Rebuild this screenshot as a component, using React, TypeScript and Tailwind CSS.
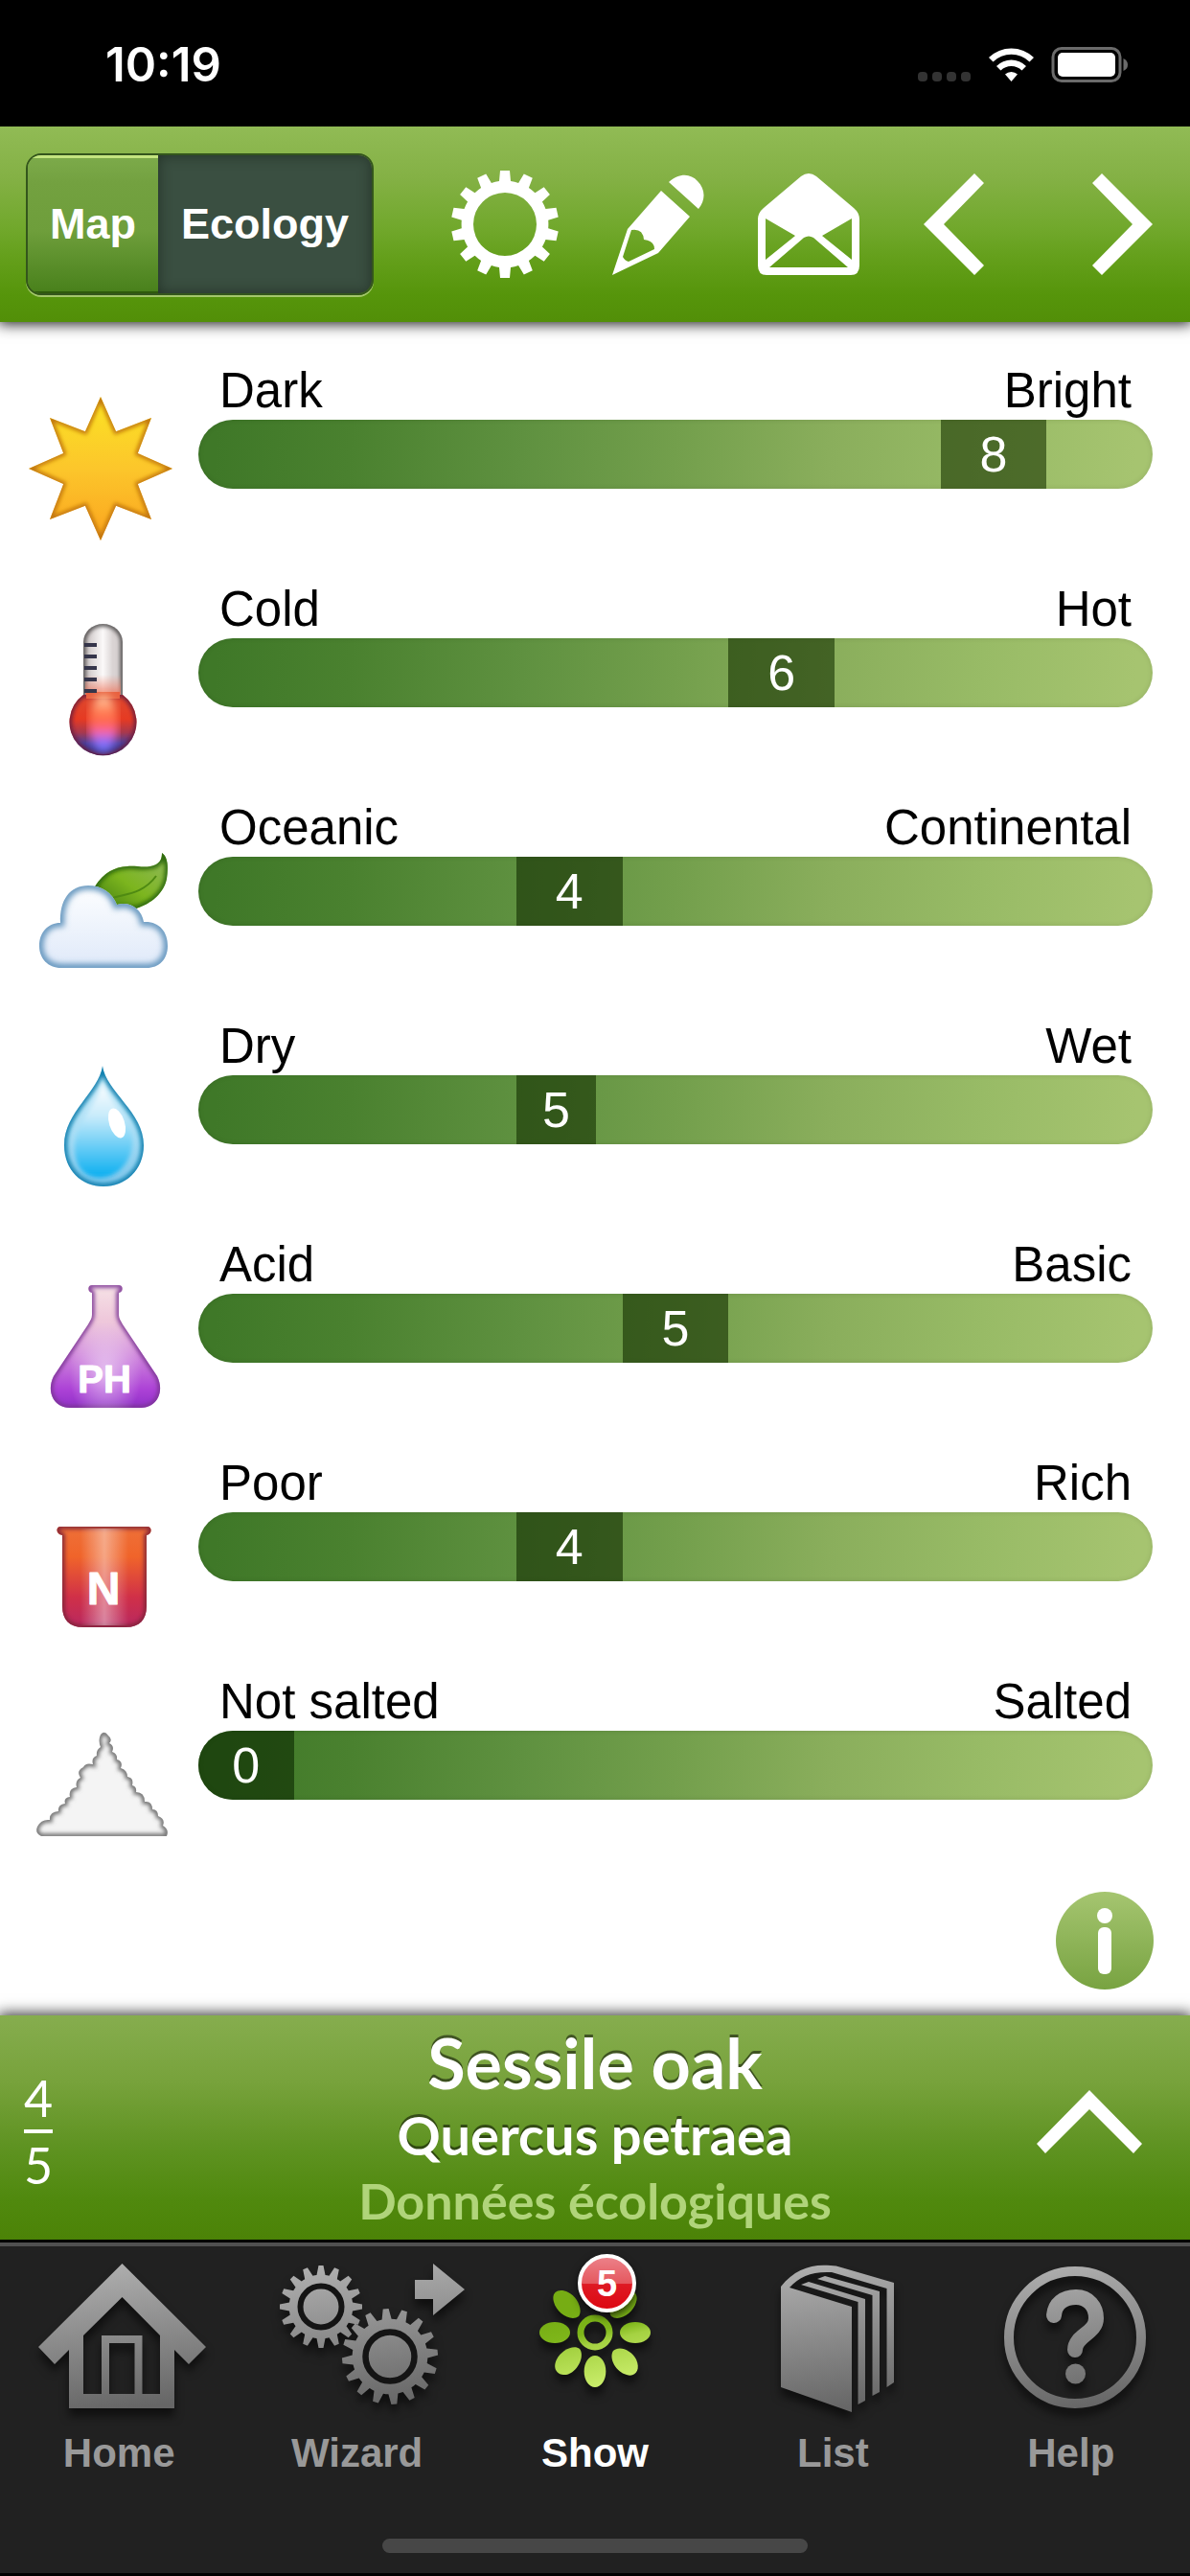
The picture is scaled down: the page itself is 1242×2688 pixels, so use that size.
import React from "react";

type Point = { cx: number; cy: number };

// Outline of a cog wheel: `teeth` trapezoid teeth around a round body
function gearPath(
  { cx, cy }: Point,
  teeth: number,
  outer: number,
  body: number,
  base: number,
  tip: number,
  start = 0
) {
  const at = (r: number, offset: number, angle: number) => {
    const x = cx + r * Math.sin(angle) + offset * Math.cos(angle);
    const y = cy - r * Math.cos(angle) + offset * Math.sin(angle);
    return `${x.toFixed(1)} ${y.toFixed(1)}`;
  };
  let d = "";
  for (let i = 0; i < teeth; i++) {
    const a = ((start + (i * 360) / teeth) * Math.PI) / 180;
    d += `${i === 0 ? "M" : `A${body} ${body} 0 0 1 `}${at(body, -base, a)}`;
    d += `L${at(outer, -tip, a)}L${at(outer, tip, a)}L${at(body, base, a)}`;
  }
  const first = (start * Math.PI) / 180;
  return `${d}A${body} ${body} 0 0 1 ${at(body, -base, first)}Z`;
}

// Filled shape with a soft darker rim on the inside
function Glossy({
  id,
  d,
  fill,
  edge,
  width = 8,
  blur = 2,
}: {
  id: string;
  d: string;
  fill: string;
  edge: string;
  width?: number;
  blur?: number;
}) {
  return (
    <g>
      <clipPath id={`${id}-clip`}>
        <path d={d} />
      </clipPath>
      <filter id={`${id}-blur`}>
        <feGaussianBlur stdDeviation={blur} />
      </filter>
      <path d={d} fill={fill} />
      <g clipPath={`url(#${id}-clip)`}>
        <path
          d={d}
          fill="none"
          stroke={edge}
          strokeWidth={width}
          filter={`url(#${id}-blur)`}
        />
      </g>
    </g>
  );
}

function Fade({ id, stops }: { id: string; stops: [string, string][] }) {
  return (
    <linearGradient id={id} x1="0" y1="0" x2="0" y2="1">
      {stops.map(([offset, color]) => (
        <stop key={offset} offset={offset} stopColor={color} />
      ))}
    </linearGradient>
  );
}

function Sun() {
  const points: string[] = [];
  for (let i = 0; i < 16; i++) {
    const r = i % 2 === 0 ? 75 : 42;
    const a = (i * Math.PI) / 8;
    points.push(
      `${(80 + r * Math.sin(a)).toFixed(1)} ${(81 - r * Math.cos(a)).toFixed(1)}`
    );
  }
  return (
    <>
      <Fade
        id="sun"
        stops={[
          ["0", "#fbe424"],
          ["0.5", "#fcc62b"],
          ["1", "#fba41f"],
        ]}
      />
      <Glossy
        id="sun"
        d={`M${points.join("L")}Z`}
        fill="url(#sun)"
        edge="#c07510"
        width={5}
      />
    </>
  );
}

function Thermometer() {
  return (
    <>
      <linearGradient id="tube" x1="0" x2="1" y1="0" y2="0">
        <stop offset="0.1" stopColor="#cfc8c8" />
        <stop offset="0.5" stopColor="#fbf9f9" />
        <stop offset="0.75" stopColor="#d9d3d3" />
      </linearGradient>
      <Fade
        id="bulb"
        stops={[
          ["0", "#dd4a30"],
          ["0.4", "#e63a22"],
          ["0.62", "#a8384e"],
          ["0.8", "#4a3f9a"],
          ["1", "#2e3180"],
        ]}
      />
      <Fade
        id="bulb-shine"
        stops={[
          ["0", "#ffd9b0"],
          ["0.3", "#ff7a50"],
          ["0.5", "#ff6450"],
          ["0.66", "#f766b0"],
          ["0.8", "#8a6cf8"],
          ["1", "#6a78ff"],
        ]}
      />
      <linearGradient id="warm" x1="0" x2="0" y1="0" y2="1">
        <stop offset="0" stopColor="#f08a74" stopOpacity="0" />
        <stop offset="1" stopColor="#ee6a50" />
      </linearGradient>
      <filter id="soft">
        <feGaussianBlur stdDeviation="5" />
      </filter>
      <clipPath id="bulb-area">
        <circle cx="83" cy="117" r="34" />
      </clipPath>
      <Glossy
        id="tube"
        d="M62 96V34A20.5 19 0 0 1 103 34V96Z"
        fill="url(#tube)"
        edge="#4c4a4a"
        width={5}
      />
      <rect x="64" y="68" width="37" height="26" fill="url(#warm)" />
      <Glossy
        id="bulb"
        d="M62 89A35 35 0 1 0 103 89Z"
        fill="url(#bulb)"
        edge="#6a1c3c"
        width={5}
      />
      <rect x="65" y="86" width="35" height="7" fill="#e8603f" />
      <g clipPath="url(#bulb-area)">
        <ellipse
          cx="83"
          cy="119"
          rx="15"
          ry="30"
          fill="url(#bulb-shine)"
          filter="url(#soft)"
        />
      </g>
      <path
        d="M63 37H76M63 49H76M63 61H76M63 73H76M63 85H76"
        stroke="#35354a"
        strokeWidth="4"
      />
    </>
  );
}

function CloudLeaf() {
  return (
    <>
      <linearGradient id="leaf" x1="0" y1="1" x2="1" y2="0">
        <stop offset="0" stopColor="#3f7a10" />
        <stop offset="0.45" stopColor="#7cb51e" />
        <stop offset="0.85" stopColor="#8cb84e" />
        <stop offset="1" stopColor="#4f8420" />
      </linearGradient>
      <Fade
        id="cloud"
        stops={[
          ["0", "#fdfeff"],
          ["1", "#dfe9f9"],
        ]}
      />
      <Glossy
        id="leaf"
        d="M74 61C84 46 94 41 108 40C118 39 128 43 138 38C143 35 144 31 144 26C150 30 151 40 149 53C146 68 133 79 117 84L92 84Z"
        fill="url(#leaf)"
        edge="#2f6b0c"
        width={6}
      />
      <path
        d="M84 76C100 68 122 72 138 50"
        fill="none"
        stroke="#4f8a12"
        strokeWidth="2"
      />
      <Glossy
        id="cloud"
        d="M39 146C25 146 16 136 16 123C16 109 25 99 38 99C37 75 48 60 67 60C81 60 92 67 97 80C110 76 123 84 125 98C141 97 150 108 150 123C150 137 141 146 128 146Z"
        fill="url(#cloud)"
        edge="#5c90ba"
        width={8}
        blur={3}
      />
    </>
  );
}

function Drop() {
  return (
    <>
      <Fade
        id="drop"
        stops={[
          ["0", "#d8f1fb"],
          ["0.6", "#a4dcf5"],
          ["1", "#7cc4ea"],
        ]}
      />
      <Fade
        id="drop-core"
        stops={[
          ["0", "#ffffff"],
          ["0.35", "#c8ebfb"],
          ["1", "#08aef0"],
        ]}
      />
      <filter id="drop-soft">
        <feGaussianBlur stdDeviation="2" />
      </filter>
      <Glossy
        id="drop"
        d="M82 20C86 48 125 68 125 103C125 129 106 146 83 146C60 146 42 129 42 103C42 68 78 48 82 20Z"
        fill="url(#drop)"
        edge="#0b7fae"
        width={6}
      />
      <path
        d="M82 38C87 56 113 76 113 99C113 121 97 137 79 137C63 137 53 125 53 107C53 80 78 58 82 38Z"
        fill="url(#drop-core)"
        filter="url(#drop-soft)"
      />
      <ellipse
        cx="97"
        cy="80"
        rx="8"
        ry="16"
        fill="#ffffff"
        transform="rotate(-18 97 80)"
      />
    </>
  );
}

function Flask() {
  return (
    <>
      <Fade
        id="flask"
        stops={[
          ["0", "#f6e2e6"],
          ["0.3", "#eec6da"],
          ["0.6", "#cc80dc"],
          ["0.85", "#ac42d6"],
          ["1", "#9030c8"],
        ]}
      />
      <radialGradient id="flask-glow">
        <stop offset="0" stopColor="#ffffff" stopOpacity="0.55" />
        <stop offset="1" stopColor="#ffffff" stopOpacity="0" />
      </radialGradient>
      <Glossy
        id="flask"
        d="M71 29C66 28 66 21 71 21H99C104 21 104 28 99 29V52C99 56 101 58 103 62L139 116C147 132 139 149 122 149H48C31 149 23 132 31 116L67 62C69 58 71 56 71 52Z"
        fill="url(#flask)"
        edge="#7c3494"
        width={5}
      />
      <ellipse cx="85" cy="112" rx="38" ry="56" fill="url(#flask-glow)" />
      <text
        x="84"
        y="133"
        textAnchor="middle"
        fill="#ffffff"
        stroke="#ffffff"
        strokeWidth="1"
        strokeLinejoin="round"
        className="font-['Liberation_Sans',sans-serif] text-[40px] font-bold"
      >
        PH
      </text>
    </>
  );
}

function Beaker() {
  return (
    <>
      <Fade
        id="beaker"
        stops={[
          ["0", "#ee7038"],
          ["0.3", "#f0642a"],
          ["0.7", "#d03048"],
          ["1", "#b82860"],
        ]}
      />
      <linearGradient id="beaker-glow" x1="0" x2="1" y1="0" y2="0">
        <stop offset="0.2" stopColor="#ffffff" stopOpacity="0" />
        <stop offset="0.5" stopColor="#ffffff" stopOpacity="0.42" />
        <stop offset="0.8" stopColor="#ffffff" stopOpacity="0" />
      </linearGradient>
      <Glossy
        id="beaker"
        d="M40 54C33 53 33 45 38 45H129C134 45 134 53 128 54V128C128 142 121 150 106 150H62C47 150 40 142 40 128Z"
        fill="url(#beaker)"
        edge="#802038"
        width={5}
      />
      <rect x="42" y="47" width="84" height="101" fill="url(#beaker-glow)" />
      <text
        x="83"
        y="126"
        textAnchor="middle"
        fill="#ffffff"
        stroke="#ffffff"
        strokeWidth="1"
        strokeLinejoin="round"
        className="font-['Liberation_Sans',sans-serif] text-[48px] font-bold"
      >
        N
      </text>
    </>
  );
}

function SaltHeap() {
  return (
    <Glossy
      id="salt"
      d="M18 140Q11 137 14 130Q18 122 27 123Q26 115 36 114Q35 107 43 106Q41 100 48 99Q46 90 55 89Q53 82 59 79Q54 72 62 68Q64 63 72 65Q70 58 76 56Q75 50 80 47Q77 40 80 34Q84 29 88 35Q93 39 89 43Q95 46 92 52Q98 54 97 60Q104 62 101 69Q108 71 108 78Q115 79 113 87Q118 88 117 94Q126 94 126 104Q134 103 134 112Q140 112 140 119Q148 122 145 129Q152 133 149 140Z"
      fill="#f4f4f4"
      edge="#666666"
      width={5}
    />
  );
}

const gauges = [
  { low: "Dark", high: "Bright", value: 8, index: 7, steps: 9, Icon: Sun },
  { low: "Cold", high: "Hot", value: 6, index: 5, steps: 9, Icon: Thermometer },
  { low: "Oceanic", high: "Continental", value: 4, index: 3, steps: 9, Icon: CloudLeaf },
  { low: "Dry", high: "Wet", value: 5, index: 4, steps: 12, Icon: Drop },
  { low: "Acid", high: "Basic", value: 5, index: 4, steps: 9, Icon: Flask },
  { low: "Poor", high: "Rich", value: 4, index: 3, steps: 9, Icon: Beaker },
  { low: "Not salted", high: "Salted", value: 0, index: 0, steps: 10, Icon: SaltHeap },
];

function Gauge({ low, high, value, index, steps, Icon }: (typeof gauges)[number]) {
  return (
    <li className="flex h-[228px] items-start gap-[22px] pr-[39px] pl-[25px]">
      <svg viewBox="0 0 160 160" className="mt-[30px] size-40 shrink-0" aria-hidden="true">
        <Icon />
      </svg>
      <div className="flex-1">
        <div className="flex justify-between px-[22px] text-[51px] leading-[60px] text-black">
          <span>{low}</span>
          <span>{high}</span>
        </div>
        <div
          role="meter"
          aria-label={`${low} - ${high}`}
          aria-valuenow={value}
          aria-valuemin={0}
          aria-valuemax={steps}
          className="h-[72px] overflow-hidden rounded-full bg-[linear-gradient(94deg,#3f7828_2%,#4a812f_16%,#5f9140_34%,#739f4c_50%,#8aae5c_66%,#98bb66_82%,#a6c470_98%)] shadow-[inset_0_0_6px_-1px_rgba(0,0,0,0.15)]"
        >
          <div
            className="flex h-full items-center justify-center bg-[#0c2e00]/60 bg-blend-multiply text-[52px] leading-[72px] text-white"
            style={{
              width: `${100 / steps}%`,
              marginLeft: `${(100 * index) / steps}%`,
              backgroundColor: `rgb(${10 + index * 2} ${38 + index * 2} 0 / 0.6)`,
            }}
          >
            {value}
          </div>
        </div>
      </div>
    </li>
  );
}

function StatusBar() {
  return (
    <div className="flex h-[132px] items-center justify-between bg-black pt-1 pr-[65px] pl-[110px] text-white">
      <span className="font-['Inter',sans-serif] text-[49px] leading-[60px] font-semibold">
        10:19
      </span>
      <svg viewBox="0 0 220 48" className="h-12 w-[220px]" aria-hidden="true">
        <g fill="#333333">
          <rect x="1" y="31" width="10" height="10" rx="4" />
          <rect x="16" y="31" width="10" height="10" rx="4" />
          <rect x="31" y="31" width="10" height="10" rx="4" />
          <rect x="46" y="31" width="10" height="10" rx="4" />
        </g>
        <path
          fill="#ffffff"
          d="M75 16A34 34 0 0 1 122 16L117.500 20.500A27 27 0 0 0 79.500 20.500ZM83 25A22 22 0 0 1 114 25L109.500 29.500A15.500 15.500 0 0 0 87.500 29.500ZM92 33.500A9.500 9.500 0 0 1 105 33.500L98.500 41Z"
        />
        <rect x="142" y="6.500" width="70" height="34" rx="9" fill="none" stroke="#6b6b6b" strokeWidth="3" />
        <rect x="147" y="11" width="60" height="25" rx="5" fill="#ffffff" />
        <path d="M215.500 17Q220 19 220 23.500T215.500 30Z" fill="#6b6b6b" />
      </svg>
    </div>
  );
}

const iconButton = "flex h-full items-center justify-center";

function Toolbar() {
  return (
    <header className="relative z-10 flex h-[204px] items-center bg-[linear-gradient(#91bb55_0%,#84b145_26%,#71a82c_52%,#65a01c_66%,#56950b_86%,#528f08_100%)] pr-[39px] pl-[27px] shadow-[0_0_14px_2px_rgba(0,0,0,0.9)]">
      <div className="flex h-[148px] w-[363px] shrink-0 overflow-hidden rounded-[16px] border-2 border-[#34561c] text-[45px] leading-[60px] font-bold text-white shadow-[0_2px_0_#a3c76c] text-shadow-[0_-3px_0_rgba(0,0,0,0.45)]">
        <button
          type="button"
          className="w-[136px] bg-[linear-gradient(#7dab4b_0%,#73a140_20%,#6e9e3b_55%,#48801b_100%)] shadow-[inset_0_3px_0_#c3e57f,inset_0_-2px_0_#2e5a0c]"
        >
          Map
        </button>
        <button
          type="button"
          aria-pressed="true"
          className="flex-1 bg-[#3a4f41] shadow-[inset_0_0_14px_rgba(20,30,22,0.6)]"
        >
          Ecology
        </button>
      </div>
      <nav className="ml-20 flex h-full flex-1 items-center gap-[54px]">
        <button type="button" aria-label="Settings" className={iconButton}>
          <svg viewBox="0 0 114 114" className="size-[114px] fill-white">
            <path
              fillRule="evenodd"
              d={`${gearPath({ cx: 57, cy: 57 }, 14, 56, 45, 6, 5)}M57 24A33 33 0 1 0 57 90A33 33 0 1 0 57 24Z`}
            />
          </svg>
        </button>
        <button type="button" aria-label="Edit" className={iconButton}>
          <svg viewBox="0 0 98 106" className="h-[106px] w-[98px] fill-white">
            <path
              fillRule="evenodd"
              d="M1 106L17 58L52 18L82 45L49 83ZM21 59L12 87Q14 91 18 92L45 79Q45 70 34 69Q33 57 21 59Z"
            />
            <path d="M60 9C71 -1 83 0 90 8C98 16 99 27 91 37Z" />
          </svg>
        </button>
        <button type="button" aria-label="Send" className={iconButton}>
          <svg viewBox="0 0 108 106" className="h-[106px] w-[108px] fill-white">
            <path
              fillRule="evenodd"
              d="M46 3Q54 -3 62 3L101 36Q107 41 107 48V96Q107 106 98 106H10Q1 106 1 96V48Q1 41 7 36ZM9 47V90L40 65ZM99 47L68 65L99 90ZM13 98H95L59 67Q54 64 49 67Z"
            />
          </svg>
        </button>
        <div className="ml-3 flex h-full flex-1 items-center justify-between">
          <button type="button" aria-label="Previous" className={iconButton}>
            <svg viewBox="0 0 64 106" className="h-[106px] w-16 fill-white">
              <path d="M53 0L63 10L21 53L63 96L53 106L0 53Z" />
            </svg>
          </button>
          <button type="button" aria-label="Next" className={iconButton}>
            <svg viewBox="0 0 64 106" className="h-[106px] w-16 fill-white">
              <path d="M11 0L1 10L43 53L1 96L11 106L64 53Z" />
            </svg>
          </button>
        </div>
      </nav>
    </header>
  );
}

function SpeciesBar() {
  return (
    <section className="relative z-10 flex h-[234px] items-center bg-[linear-gradient(#86ad4e_0%,#77a23b_30%,#5f9322_58%,#50890e_82%,#4c8307_100%)] px-[25px] font-['Lato',sans-serif] text-white shadow-[0_0_14px_2px_rgba(0,0,0,0.8)]">
      <div className="flex w-[136px] flex-col items-start pt-2 text-[52px] leading-[66px]">
        <span className="border-b-4 border-white">4</span>
        <span>5</span>
      </div>
      <div className="flex flex-1 flex-col items-center whitespace-nowrap">
        <h1 className="text-[72px] leading-[82px] font-bold text-shadow-[0_-3px_0_rgba(0,0,0,0.5)]">
          Sessile oak
        </h1>
        <h2 className="text-[56px] leading-[70px] font-bold text-shadow-[0_-3px_0_rgba(0,0,0,0.5)]">
          Quercus petraea
        </h2>
        <p className="text-[52px] leading-[66px] font-bold text-[#b0d47a]">
          Données écologiques
        </p>
      </div>
      <button type="button" aria-label="Show details" className="flex w-[136px] justify-start pb-3">
        <svg viewBox="0 0 112 66" className="h-[66px] w-28 fill-white">
          <path d="M56 0L111 56L102 66L56 20L10 66L1 56Z" />
        </svg>
      </button>
    </section>
  );
}

function HomeIcon() {
  return (
    <path
      fill="url(#tab-gray)"
      fillRule="evenodd"
      d="M103.500 7L191 94L173 112L158 97V158H48V97L33 112L16 94ZM103.500 42L63 82V143H82V82H124.500V143H143V82ZM90 90V143H116.500V90Z"
    />
  );
}

function WizardIcon() {
  return (
    <g fill="url(#tab-gray)">
      <path d={gearPath({ cx: 62, cy: 52 }, 16, 43, 33, 4.5, 2.5)} />
      <circle cx="62" cy="52" r="21.500" fill="none" stroke="#141414" strokeWidth="6" />
      <path d={gearPath({ cx: 134, cy: 104 }, 16, 50, 39, 5, 3, -5)} />
      <circle cx="134" cy="104" r="25.500" fill="none" stroke="#141414" strokeWidth="6.500" />
      <path d="M160 24H179V7L212 34L179 61V44H160Z" />
    </g>
  );
}

function ShowIcon() {
  return (
    <g fill="url(#tab-green)">
      <circle cx="100" cy="79" r="15" fill="none" stroke="url(#tab-green)" strokeWidth="7" />
      <path d="M126 79A16 11 0 1 0 158 79A16 11 0 1 0 126 79Z" />
      <path d="M42 79A16 11 0 1 0 74 79A16 11 0 1 0 42 79Z" />
      <path d="M100 103A11 16 0 1 0 100 136A11 16 0 1 0 100 103Z" />
      <path d="M119 98C125 92 138 97 143 107C148 118 142 126 133 123C122 120 114 106 119 98Z" />
      <path d="M84 96C78 91 65 97 60 107C55 117 61 124 70 123C81 121 90 104 84 96Z" />
      <path d="M83 62C88 55 81 41 72 37C62 32 54 37 57 47C60 59 75 68 83 62Z" />
      <path d="M117 62C112 55 119 41 128 37C138 32 146 37 143 47C140 59 125 68 117 62Z" />
    </g>
  );
}

function ListIcon() {
  return (
    <g fill="url(#tab-gray)">
      <path
        fillRule="evenodd"
        d="M46 31C60 13 78 7 98 9Q104 9 109 11L164 27V131L156.500 136V33L99 16C78 15 66 20 55 32L120 52V162L46 136Z"
      />
      <path d="M67 29L75 26L134 44V150L126.500 154V47Z" />
      <path d="M84 23L92 20L149 36V141L141.500 145V40Z" />
    </g>
  );
}

function HelpIcon() {
  return (
    <g fill="none" stroke="url(#tab-gray)" strokeLinecap="round">
      <circle cx="104" cy="84" r="69" strokeWidth="10" />
      <path
        strokeWidth="16"
        d="M82 61C83 49 92 42 105 42C118 42 126 52 126 64C126 80 104 82 104 97"
      />
      <circle cx="104.500" cy="122" r="10.500" fill="url(#tab-gray)" stroke="none" />
    </g>
  );
}

const tabs = [
  { name: "Home", Icon: HomeIcon },
  { name: "Wizard", Icon: WizardIcon },
  { name: "Show", Icon: ShowIcon, active: true, badge: 5 },
  { name: "List", Icon: ListIcon },
  { name: "Help", Icon: HelpIcon },
];

function TabBar() {
  return (
    <footer className="relative z-20 flex flex-1 flex-col items-center border-b-[3px] border-black bg-[#212121]">
      <div className="h-[3px] w-full bg-black" />
      <div className="h-1 w-full bg-[#505050]" />
      <svg className="absolute size-0" aria-hidden="true">
        <defs>
          <linearGradient id="tab-gray" gradientUnits="userSpaceOnUse" x1="80" y1="5" x2="100" y2="160">
            <stop offset="0" stopColor="#b0b0b0" />
            <stop offset="1" stopColor="#666666" />
          </linearGradient>
          <linearGradient id="tab-green" gradientUnits="userSpaceOnUse" x1="88" y1="55" x2="108" y2="136">
            <stop offset="0" stopColor="#76ad14" />
            <stop offset="0.300" stopColor="#7eb61a" />
            <stop offset="0.450" stopColor="#a5d242" />
            <stop offset="1" stopColor="#cbee6c" />
          </linearGradient>
        </defs>
      </svg>
      <nav className="grid w-full grid-cols-5 pt-[11px]">
        {tabs.map(({ name, Icon, active, badge }) => (
          <a
            key={name}
            href={`#${name.toLowerCase()}`}
            aria-current={active ? "page" : undefined}
            className={
              active
                ? "relative flex flex-col items-center text-white"
                : "relative flex flex-col items-center text-[#999999]"
            }
          >
            <svg
              viewBox="-20 0 240 180"
              className="h-[180px] w-60 drop-shadow-[0_8px_5px_rgba(0,0,0,0.55)]"
              aria-hidden="true"
            >
              <Icon />
            </svg>
            <span className="text-[42px] leading-[50px] font-bold">{name}</span>
            {badge && (
              <span className="absolute top-0 left-1/2 -mt-[3px] -ml-[18px] flex size-[61px] items-center justify-center rounded-full border-4 border-white bg-[linear-gradient(#ec8088_0%,#e5585f_50%,#de1a24_52%,#dd0812_100%)] text-[38px] leading-none font-bold shadow-[0_4px_8px_rgba(0,0,0,0.7)]">
                {badge}
              </span>
            )}
          </a>
        ))}
      </nav>
      <div className="mt-auto mb-[21px] h-[15px] w-[444px] rounded-full bg-[#474747]" />
    </footer>
  );
}

function App() {
  return (
    <div className="flex min-h-screen flex-col bg-white font-['Liberation_Sans',Arial,sans-serif]">
      <StatusBar />
      <Toolbar />
      <main className="pt-[42px] pb-[27px]">
        <ul>
          {gauges.map((gauge) => (
            <Gauge key={gauge.low} {...gauge} />
          ))}
        </ul>
        <div className="flex justify-end pr-[38px]">
          <button type="button" aria-label="Information">
            <svg viewBox="0 0 102 102" className="size-[102px]">
              <Fade
                id="info"
                stops={[
                  ["0", "#a5c570"],
                  ["1", "#78a341"],
                ]}
              />
              <circle cx="51" cy="51" r="51" fill="url(#info)" />
              <circle cx="51" cy="25" r="8" fill="#ffffff" />
              <rect x="44" y="37" width="14" height="49" rx="6" fill="#ffffff" />
            </svg>
          </button>
        </div>
      </main>
      <SpeciesBar />
      <TabBar />
    </div>
  );
}

export default App;
